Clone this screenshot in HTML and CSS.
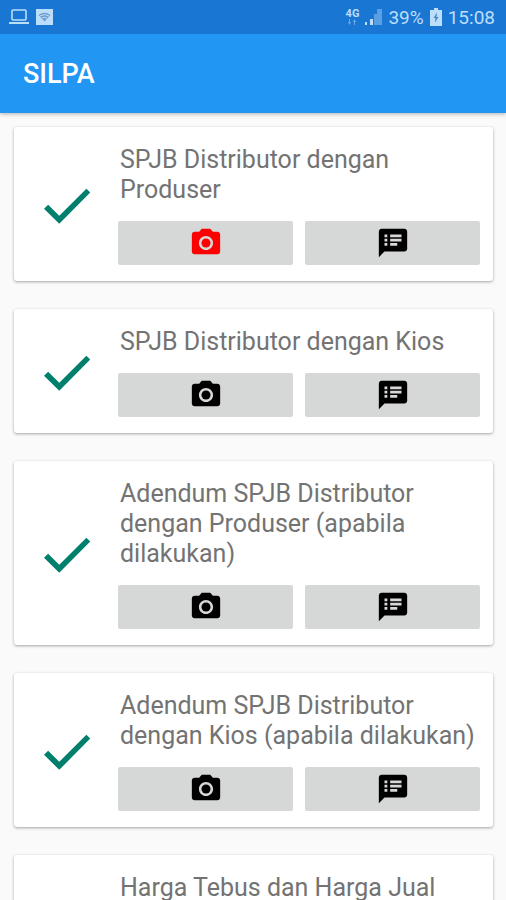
FILE: index.html
```html
<!DOCTYPE html>
<html lang="id">
<head>
    <meta charset="UTF-8">
    <meta name="viewport" content="width=device-width, initial-scale=1.0">
    <title>SILPA</title>
    <link rel="stylesheet" href="styles.css">
</head>
<body>
    <!-- Shared icons -->
    <svg class="sprite" aria-hidden="true">
        <symbol id="check" viewBox="0 0 24 24">
            <path d="M9 16.17L4.700 11.87l-1.600 1.600L9 19.300 21 7.200l-1.500-1.500z"/>
        </symbol>
        <symbol id="camera" viewBox="0 0 24 24">
            <circle cx="12" cy="12" r="3.2"/>
            <path d="M9 2L7.17 4H4c-1.1 0-2 .9-2 2v12c0 1.1.9 2 2 2h16c1.1 0 2-.9 2-2V6c0-1.1-.9-2-2-2h-3.17L15 2H9zm3 15c-2.76 0-5-2.24-5-5s2.24-5 5-5 5 2.24 5 5-2.24 5-5 5z"/>
        </symbol>
        <symbol id="notes" viewBox="0 0 24 24">
            <path d="M20 2H4c-1.1 0-1.99.9-1.99 2L2 22l4-4h14c1.1 0 2-.9 2-2V4c0-1.1-.9-2-2-2zM8 14H6v-2h2v2zm0-3H6V9h2v2zm0-3H6V6h2v2zm7 6h-5v-2h5v2zm3-3h-8V9h8v2zm0-3h-8V6h8v2z"/>
        </symbol>
    </svg>

    <header>
        <div class="status-bar">
            <svg width="20" height="16" viewBox="0 0 20 16">
                <rect x="3" y="1" width="14" height="10" rx="1" fill="none" stroke="currentColor" stroke-width="1.6"/>
                <path d="M0 13h20v2H0z" fill="currentColor"/>
            </svg>
            <svg width="17" height="16" viewBox="0 0 17 16">
                <rect width="17" height="16" fill="currentColor"/>
                <path d="M2.500 6Q8.500 1.500 14.500 6L8.500 12.500z" fill="#6f9fcb"/>
                <path d="M4 7q4.500-3 9 0M6 9q2.500-1.500 5 0" fill="none" stroke="#bbdefb"/>
            </svg>
            <div class="status-right">
                <div class="network">
                    <span>4G</span>
                    <svg width="10" height="6" viewBox="0 0 10 6" fill="currentColor" opacity="0.5">
                        <path d="M2 0h1v3h1L2.500 6 1 3h1zM7 6h1V3h1L7.500 0 6 3h1z"/>
                    </svg>
                </div>
                <svg width="17" height="16" viewBox="0 0 17 16" fill="currentColor">
                    <path d="M0 13h2v3H0zM5 10h3v6H5z"/>
                    <path d="M9 5h3v11H9zM12 0h5v16h-5z" opacity="0.4"/>
                </svg>
                <span>39%</span>
                <svg width="12" height="18" viewBox="0 0 12 18">
                    <path d="M4 0h4v2h4v16H0V2h4z" fill="currentColor"/>
                    <path d="M7 4.500L3.500 10h2L5 14.500 8.500 9h-2z" fill="#4b86c0"/>
                </svg>
                <span>15:08</span>
            </div>
        </div>
        <h1>SILPA</h1>
    </header>

    <main>
        <section class="card">
            <svg class="check"><use href="#check"/></svg>
            <div class="content">
                <h2>SPJB Distributor dengan Produser</h2>
                <div class="actions">
                    <button type="button" class="active" aria-label="Foto"><svg><use href="#camera"/></svg></button>
                    <button type="button" aria-label="Catatan"><svg><use href="#notes"/></svg></button>
                </div>
            </div>
        </section>

        <section class="card">
            <svg class="check"><use href="#check"/></svg>
            <div class="content">
                <h2>SPJB Distributor dengan Kios</h2>
                <div class="actions">
                    <button type="button" aria-label="Foto"><svg><use href="#camera"/></svg></button>
                    <button type="button" aria-label="Catatan"><svg><use href="#notes"/></svg></button>
                </div>
            </div>
        </section>

        <section class="card">
            <svg class="check"><use href="#check"/></svg>
            <div class="content">
                <h2>Adendum SPJB Distributor dengan Produser (apabila dilakukan)</h2>
                <div class="actions">
                    <button type="button" aria-label="Foto"><svg><use href="#camera"/></svg></button>
                    <button type="button" aria-label="Catatan"><svg><use href="#notes"/></svg></button>
                </div>
            </div>
        </section>

        <section class="card">
            <svg class="check"><use href="#check"/></svg>
            <div class="content">
                <h2>Adendum SPJB Distributor dengan Kios (apabila dilakukan)</h2>
                <div class="actions">
                    <button type="button" aria-label="Foto"><svg><use href="#camera"/></svg></button>
                    <button type="button" aria-label="Catatan"><svg><use href="#notes"/></svg></button>
                </div>
            </div>
        </section>

        <section class="card">
            <svg class="check"><use href="#check"/></svg>
            <div class="content">
                <h2>Harga Tebus dan Harga Jual</h2>
                <div class="actions">
                    <button type="button" aria-label="Foto"><svg><use href="#camera"/></svg></button>
                    <button type="button" aria-label="Catatan"><svg><use href="#notes"/></svg></button>
                </div>
            </div>
        </section>
    </main>
</body>
</html>
```
FILE: styles.css
```css
* {
    margin: 0;
    padding: 0;
    box-sizing: border-box;
}

body {
    display: flex;
    flex-direction: column;
    height: 100vh;
    overflow: hidden;
    font-family: Roboto, sans-serif;
    background-color: #fafafa;
}

svg {
    flex-shrink: 0;
}

.sprite {
    display: none;
}

/* Header */
header {
    flex-shrink: 0;
    background-color: #2196f3;
    box-shadow: 0 1px 4px rgba(0, 0, 0, 0.3);
    z-index: 1;
}

.status-bar {
    display: flex;
    align-items: center;
    gap: 7px;
    height: 34px;
    padding: 0 11px 0 9px;
    background-color: #1976d2;
    color: #bbdefb;
    font-size: 19px;
}

.status-right {
    display: flex;
    align-items: center;
    gap: 6px;
    margin-left: auto;
}

.network {
    display: flex;
    flex-direction: column;
    align-items: center;
    font-size: 11px;
    font-weight: 700;
    line-height: 10px;
}

h1 {
    padding: 2px 23px 0;
    color: white;
    font-size: 27px;
    font-weight: 500;
    line-height: 77px;
}

/* Cards */
main {
    display: flex;
    flex-direction: column;
    gap: 28px;
    flex: 1;
    min-height: 0;
    padding: 14px 13px 28px 14px;
    overflow: hidden;
}

.card {
    display: flex;
    flex-shrink: 0;
    align-items: center;
    padding: 18px 13px 16px 0;
    background-color: white;
    border-radius: 3px;
    box-shadow: 0 1px 3px rgba(0, 0, 0, 0.35);
}

.check {
    flex-shrink: 0;
    width: 62px;
    height: 62px;
    margin: 0 20px 0 22px;
    fill: #00806c;
}

.content {
    flex: 1;
}

h2 {
    padding-left: 2px;
    color: #737373;
    font-size: 25px;
    font-weight: 400;
    line-height: 30px;
}

/* Buttons */
.actions {
    display: flex;
    gap: 12px;
    margin-top: 16px;
}

button {
    display: flex;
    flex: 1;
    align-items: center;
    justify-content: center;
    height: 44px;
    border: none;
    border-radius: 2px;
    background-color: #d6d8d7;
    cursor: pointer;
}

button svg {
    width: 34px;
    height: 34px;
    fill: black;
}

button.active svg {
    fill: #ff0000;
}
```
